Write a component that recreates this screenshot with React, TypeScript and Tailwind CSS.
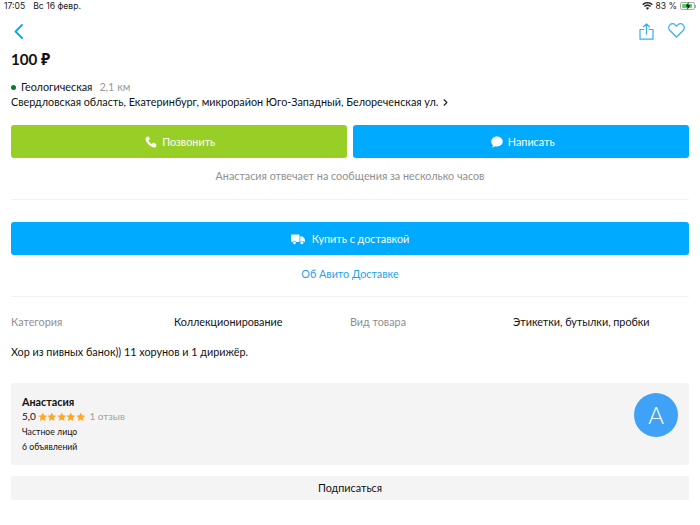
import { ChevronRight } from "lucide-react";

function Wifi() {
  return (
    <svg width="11" height="8" viewBox="0 0 22 16" fill="#222">
      <path d="M11 3c3.400 0 6.400 1.300 8.700 3.500l1.800-2C18.700 1.800 15 0 11 0S3.300 1.800.5 4.500l1.800 2C4.600 4.300 7.600 3 11 3z" />
      <path d="M11 8c2 0 3.800.8 5.200 2l1.800-2c-1.900-1.700-4.300-2.800-7-2.800S5.900 6.300 4 8l1.800 2C7.200 8.800 9 8 11 8z" />
      <path d="M11 10.500c-1.200 0-2.400.5-3.300 1.300L11 15.500l3.300-3.700c-.9-.8-2.100-1.300-3.300-1.300z" />
    </svg>
  );
}

function Battery() {
  return (
    <div className="flex items-center">
      <div className="relative w-[15px] h-[8px] rounded-[2px] border border-[#aaa] p-[1px] flex">
        <div className="w-[10px] h-full bg-[#4cd964] rounded-[1px]" />
        <svg className="absolute left-[4px] top-[-1px]" width="6" height="8" viewBox="0 0 6 8" fill="#111">
          <path d="M3.600 0 .6 4.500h2L2.200 8l3.200-4.700H3.300L3.600 0z" />
        </svg>
      </div>
      <div className="w-[1px] h-[3px] bg-[#aaa]" />
    </div>
  );
}

function ShareIcon() {
  return (
    <svg width="15" height="17" viewBox="0 0 15 17" fill="none" stroke="#35aef5" strokeWidth="1.200" strokeLinecap="round" strokeLinejoin="round">
      <path d="M7.500 11V1M4.500 3.800 7.500 .9l3 2.900" />
      <path d="M4.800 6.500H1v9.700h13V6.500h-3.800" />
    </svg>
  );
}

function HeartIcon() {
  return (
    <svg width="17" height="15" viewBox="0 0 17 15" fill="none" stroke="#35aef5" strokeWidth="1.200" strokeLinejoin="round">
      <path d="M8.500 14 1.900 7.500C.3 5.900.3 3.400 1.800 1.900c1.500-1.400 3.900-1.400 5.400 0l1.300 1.300 1.300-1.300c1.500-1.400 3.900-1.400 5.400 0 1.500 1.500 1.500 4-.1 5.600L8.500 14z" />
    </svg>
  );
}

function PhoneIcon() {
  return (
    <svg width="12" height="12" viewBox="0 0 24 24" fill="#fff">
      <path d="M6.600 1.200 2.800 2.400C1.300 3 .8 4.500 1.100 6c1.900 8.200 8.700 15.200 17 17 1.500.3 3-.3 3.500-1.700l1.200-3.700c.2-.7-.1-1.400-.7-1.700l-4.700-2.400c-.6-.3-1.300-.2-1.800.3l-2 2.300c-3-1.300-5.600-4-6.900-7l2.300-2c.5-.5.6-1.200.3-1.800L8.300 1.900c-.3-.6-1-.9-1.700-.7z" />
    </svg>
  );
}

function ChatIcon() {
  return (
    <svg width="12" height="12" viewBox="0 0 24 24" fill="#fff">
      <path d="M12 1C5.600 1 .5 5.600.5 11.200c0 2.900 1.300 5.500 3.500 7.300-.2 1.700-1.100 3.300-2.200 4.400 2.700 0 5.100-.8 7-2.200 1 .3 2.100.4 3.200.4 6.400 0 11.500-4.300 11.500-9.900S18.400 1 12 1z" />
    </svg>
  );
}

function TruckIcon() {
  return (
    <svg width="14" height="11" viewBox="0 0 28 22" fill="#fff">
      <path d="M1.500 1h14c.8 0 1.500.7 1.500 1.500V16H10.500a4 4 0 0 0-7.500 0H1.500C.7 16 0 15.300 0 14.500v-12C0 1.700.7 1 1.500 1z" />
      <path d="M18.500 5h4c.5 0 1 .2 1.300.6l3.700 4.400c.3.400.5.800.5 1.300v3.200c0 .8-.7 1.500-1.500 1.500h-.7a4 4 0 0 0-7.300 0V5z" />
      <circle cx="6.800" cy="17.500" r="3" />
      <circle cx="21.800" cy="17.500" r="3" />
    </svg>
  );
}

function StarIcon() {
  return (
    <svg width="9.500" height="9.500" viewBox="0 0 24 24" fill="#ffa826">
      <path d="M12 1l3.400 7.300 7.900 1-5.800 5.500 1.500 7.900L12 18.800l-7 3.900 1.500-7.900L.7 9.300l7.900-1L12 1z" />
    </svg>
  );
}

function Spec({ label, value }: { label: string; value: string }) {
  return (
    <div className="flex-1 flex">
      <span className="text-[#8f8f8f] w-[163px]">{label}</span>
      <span className="text-[#111] tracking-[-0.02px]">{value}</span>
    </div>
  );
}

export default function App() {
  return (
    <div className="w-[700px] h-[525px] bg-white overflow-hidden font-['Lato','Noto_Sans',sans-serif] text-[#111] text-[10.8px]">
      {/* Status bar */}
      <div className="h-[13px] px-[4px] flex items-center justify-between text-[8.6px] font-['Inter',sans-serif] text-[#222]">
        <div className="flex gap-[8px]">
          <span>17:05</span>
          <span>Вс 16 февр.</span>
        </div>
        <div className="flex items-center gap-[3px]">
          <Wifi />
          <span>83 %</span>
          <Battery />
        </div>
      </div>

      {/* Nav */}
      <div className="h-[26px] mt-[10px] pl-[14px] pr-[15px] flex items-start justify-between">
        <div className="pt-[1px]">
          <svg width="9" height="15" viewBox="0 0 9 15" fill="none" stroke="#00aaff" strokeWidth="1.800" strokeLinecap="round" strokeLinejoin="round">
            <path d="M8 1 1.500 7.500 8 14" />
          </svg>
        </div>
        <div className="flex items-start gap-[14px]">
          <ShareIcon />
          <HeartIcon />
        </div>
      </div>

      <div className="px-[11px]">
        <div className="text-[15.2px] leading-[20px] font-bold">100 ₽</div>

        {/* Location */}
        <div className="mt-[11px] flex items-center h-[15px]">
          <span className="w-[5px] h-[5px] rounded-full bg-[#0a7a2f] mr-[5px]" />
          <span>Геологическая</span>
          <span className="ml-[7px] text-[#9a9a9a]">2,1 км</span>
        </div>
        <div className="flex items-center h-[14px]">
          Свердловская область, Екатеринбург, микрорайон Юго-Западный, Белореченская ул.
          <ChevronRight size={11} strokeWidth={2.500} className="ml-[2px] text-[#222]" />
        </div>

        {/* Contact buttons */}
        <div className="mt-[16px] flex gap-[6px]">
          <div className="flex-1 h-[33px] pl-[3px] pt-[1px] rounded-[3px] bg-[#97cf26] text-white flex items-center justify-center gap-[5px]">
            <PhoneIcon />
            Позвонить
          </div>
          <div className="flex-1 h-[33px] pl-[4px] pt-[1px] rounded-[3px] bg-[#00aaff] text-white flex items-center justify-center gap-[5px]">
            <ChatIcon />
            Написать
          </div>
        </div>
        <div className="mt-[10px] h-[16px] leading-[16px] text-center text-[#8f8f8f]">
          Анастасия отвечает на сообщения за несколько часов
        </div>

        <div className="mt-[15px] h-[1px] bg-[#f2f2f2]" />

        {/* Delivery */}
        <div className="mt-[22px] h-[33px] pt-[1px] rounded-[3px] bg-[#00aaff] text-white flex items-center justify-center gap-[7px]">
          <TruckIcon />
          Купить с доставкой
        </div>
        <div className="mt-[11px] h-[16px] leading-[16px] text-center text-[#1ba4f0]">Об Авито Доставке</div>

        <div className="mt-[14px] h-[1px] bg-[#f2f2f2]" />

        {/* Specs */}
        <div className="mt-[17px] flex h-[16px] leading-[16px]">
          <Spec label="Категория" value="Коллекционирование" />
          <Spec label="Вид товара" value="Этикетки, бутылки, пробки" />
        </div>

        <div className="mt-[14px] h-[16px] leading-[16px]">Хор из пивных банок)) 11 хорунов и 1 дирижёр.</div>

        {/* Seller */}
        <div className="mt-[23px] h-[82px] rounded-[3px] bg-[#f4f4f4] px-[11px] flex justify-between">
          <div className="pt-[11px]">
            <div className="leading-[15px] font-bold">Анастасия</div>
            <div className="flex items-center h-[15px] text-[10px] leading-[15px]">
              <span>5,0</span>
              <span className="ml-[2px] flex">
                <StarIcon />
                <StarIcon />
                <StarIcon />
                <StarIcon />
                <StarIcon />
              </span>
              <span className="ml-[4px] text-[#a3a3a3]">1 отзыв</span>
            </div>
            <div className="text-[8.7px] leading-[15px]">Частное лицо</div>
            <div className="text-[8.7px] leading-[15px]">6 объявлений</div>
          </div>
          <div className="mt-[10px] w-[44px] h-[44px] rounded-full bg-[#3fa2f7] text-white text-[24px] font-light flex items-center justify-center">
            А
          </div>
        </div>

        <div className="mt-[11px] h-[24px] rounded-[3px] bg-[#f4f4f4] flex items-center justify-center">Подписаться</div>
      </div>
    </div>
  );
}
